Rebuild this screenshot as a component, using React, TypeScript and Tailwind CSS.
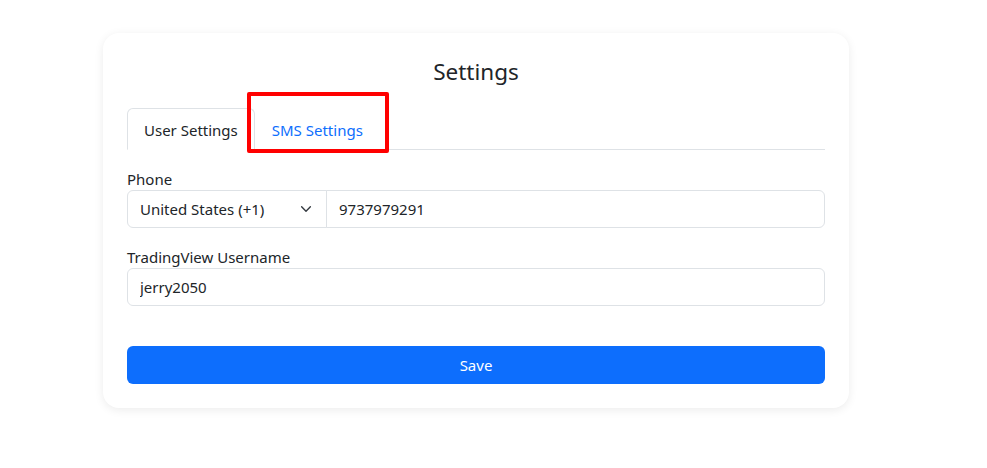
import { useState } from 'react'

const FONT = 'font-["Segoe_UI","Noto_Sans",sans-serif]'

function Chevron() {
  return (
    <svg width="14" height="14" viewBox="0 0 16 16" fill="none" stroke="#343a40" strokeWidth="1.6" strokeLinecap="round" strokeLinejoin="round">
      <path d="m3 5.5 5 5 5-5" />
    </svg>
  )
}

export default function App() {
  const [tab, setTab] = useState<'user' | 'sms'>('user')
  const [phone, setPhone] = useState('9737979291')
  const [username, setUsername] = useState('jerry2050')

  return (
    <div className={`relative min-h-[468px] bg-white text-[#212529] ${FONT}`}>
      <div className="ml-[103px] pt-[33px]">
        <div className="w-[746px] rounded-2xl bg-white p-6 shadow-[0_2px_10px_rgba(0,0,0,0.08)]">
          <h2 className="text-center text-[22.5px] leading-[28px] font-normal mt-[1px]">Settings</h2>

          {/* Tabs */}
          <div className="mt-[22px] flex border-b border-[#dee2e6]">
            <button
              type="button"
              onClick={() => setTab('user')}
              className={`-mb-px rounded-t-md border px-4 pt-[9px] pb-[7px] text-[15px] leading-6 ${
                tab === 'user' ? 'border-[#dee2e6] border-b-white bg-white text-[#212529]' : 'border-transparent text-[#0d6efd]'
              }`}
            >
              User Settings
            </button>
            <button
              type="button"
              onClick={() => setTab('sms')}
              className={`-mb-px rounded-t-md border px-4 pt-[9px] pb-[7px] text-[15px] leading-6 ${
                tab === 'sms' ? 'border-[#dee2e6] border-b-white bg-white text-[#212529]' : 'border-transparent text-[#0d6efd]'
              }`}
            >
              SMS Settings
            </button>
          </div>

          <div className="mt-4 text-[15px]">
            {/* Phone */}
            <label className="block leading-6 pt-px">Phone</label>
            <div className="flex h-[38px] -mt-px">
              <div className="flex w-[200px] items-center justify-between rounded-l-md border border-[#dee2e6] pl-3 pr-[13px]">
                <span>United States (+1)</span>
                <Chevron />
              </div>
              <input
                value={phone}
                onChange={e => setPhone(e.target.value)}
                className="-ml-px flex-1 rounded-r-md border border-[#dee2e6] px-3 outline-none"
              />
            </div>

            {/* Username */}
            <label className="mt-4 block leading-6 pt-px">TradingView Username</label>
            <input
              value={username}
              onChange={e => setUsername(e.target.value)}
              className="-mt-px h-[38px] w-full rounded-md border border-[#dee2e6] px-3 outline-none"
            />

            <button
              type="button"
              className="mt-10 h-[38px] w-full rounded-md bg-[#0d6efd] text-white"
            >
              Save
            </button>
          </div>
        </div>
      </div>

      {/* highlight box around SMS tab */}
      <div className="pointer-events-none absolute left-[247px] top-[92px] h-[61px] w-[142px] rounded-[2px] border-4 border-[#ff0000]" />
    </div>
  )
}
